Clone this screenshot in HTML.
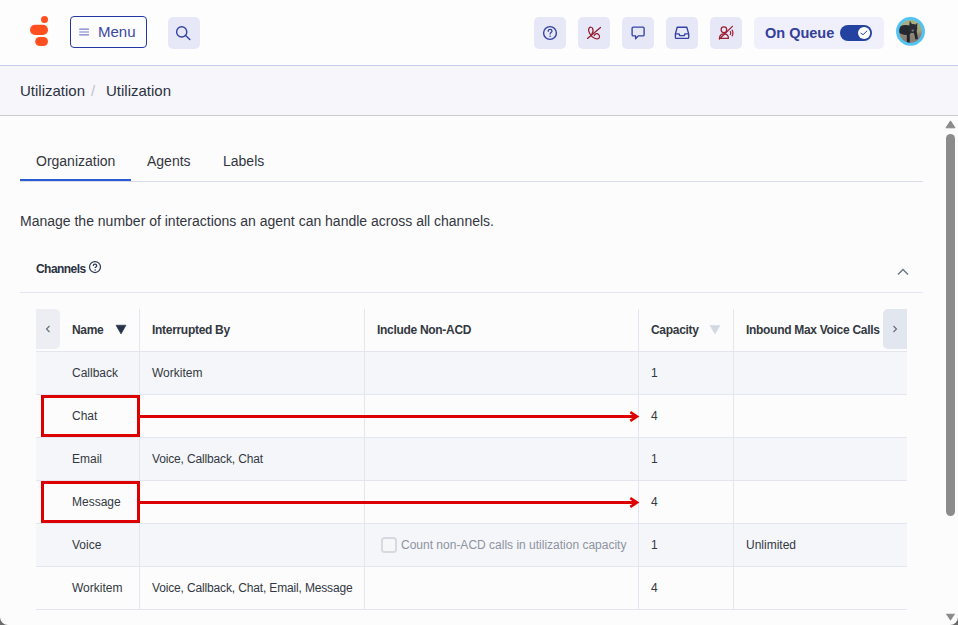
<!DOCTYPE html>
<html><head><meta charset="utf-8">
<style>
*{box-sizing:border-box;margin:0;padding:0}
html,body{width:958px;height:625px;overflow:hidden;background:#6a6a6a}
body{font-family:"Liberation Sans",sans-serif;position:relative}
#win{position:absolute;left:0;top:0;width:958px;height:625px;background:#fcfcfd;border-radius:0 0 8px 8px;overflow:hidden}
.a{position:absolute;white-space:nowrap}
#hdr{position:absolute;left:0;top:0;width:958px;height:66px;background:#fdfdfe;border-bottom:1px solid #c6cdea}
#crumb{position:absolute;left:0;top:66px;width:958px;height:50px;background:#f6f6fb;border-bottom:1px solid #cbcbcd}
.ib{position:absolute;top:17px;width:32px;height:32px;border-radius:5px;background:#e7e8f7}
.ib svg{position:absolute;left:4px;top:4px}
.t12{font-size:12px;color:#33383f}
.th{font-size:12px;font-weight:bold;color:#2b3140;letter-spacing:-0.3px}
.row{position:absolute;left:36px;width:871px;height:43px;border-bottom:1px solid #e3e6ee}
.odd{background:#f5f6f9}
.even{background:#fcfcfd}
.vl{position:absolute;top:309px;width:1px;height:301px;background:#e3e6ee}
.cell{position:absolute;line-height:42px;font-size:12px;color:#33383f;white-space:nowrap}
</style></head><body>
<div id="win">
  <div id="hdr">
    <!-- logo -->
    <svg class="a" style="left:0;top:0" width="60" height="60">
      <circle cx="44.5" cy="19.5" r="3.5" fill="#ff4f1f"/>
      <rect x="30" y="24.8" width="18" height="10.2" rx="5.1" fill="#ff4f1f"/>
      <rect x="35.2" y="37" width="12.8" height="9" rx="4.5" fill="#ff4f1f"/>
    </svg>
    <div class="a" style="left:70px;top:16px;width:77px;height:32px;border:1px solid #24389f;border-radius:4px"></div>
    <svg class="a" style="left:70px;top:16px" width="30" height="32">
      <path d="M9.3 13.2H18.9M9.3 16H18.9M9.3 18.8H18.9" stroke="#7680c2" stroke-width="1.2"/>
    </svg>
    <div class="a" style="left:98px;top:23px;font-size:15px;line-height:17px;color:#3a46a2">Menu</div>
    <div class="ib" style="left:168px"></div>
    <svg class="a" style="left:168px;top:17px" width="32" height="32">
      <circle cx="13.7" cy="14.9" r="5.1" fill="none" stroke="#3442a6" stroke-width="1.4"/>
      <path d="M17.6 18.5L21.8 22.5" stroke="#3442a6" stroke-width="1.4" stroke-linecap="round"/>
    </svg>

    <div class="ib" style="left:534px"></div>
    <svg class="a" style="left:534px;top:17px" width="32" height="32">
      <circle cx="16" cy="16" r="6.4" fill="none" stroke="#3442a6" stroke-width="1.4"/>
      <path d="M14.2 14.3c0-1.2.8-1.9 1.9-1.9s1.9.7 1.9 1.7c0 1.4-1.9 1.5-1.9 2.9" fill="none" stroke="#3442a6" stroke-width="1.25" stroke-linecap="round"/>
      <circle cx="16.1" cy="19.3" r="0.8" fill="#3442a6"/>
    </svg>
    <div class="ib" style="left:578px"></div>
    <svg class="a" style="left:578px;top:17px" width="32" height="32">
      <path d="M9.5 21.4L22.5 10.4" stroke="#951a2e" stroke-width="1.25" stroke-linecap="round"/>
      <path d="M13.8 17C15 15.5 15.4 13.2 14.6 11.4C14 10.3 12.2 9.7 11.2 10.8C10.4 11.8 10.6 14.2 11.6 16.2C12.6 18.2 14.4 20.2 16.6 21.3C18.2 22.1 20.6 22.4 21.3 20.8C21.9 19.2 21 17.1 19.2 16.6C17.9 16.3 16.8 17.3 16.2 18.4" fill="none" stroke="#951a2e" stroke-width="1.2" stroke-linecap="round"/>
    </svg>
    <div class="ib" style="left:622px"></div>
    <svg class="a" style="left:622px;top:17px" width="32" height="32">
      <path d="M11.3 10.1h9.6a1.2 1.2 0 0 1 1.2 1.2v6.4a1.2 1.2 0 0 1-1.2 1.2h-4.6l-2.7 2.8v-2.8h-2.3a1.2 1.2 0 0 1-1.2-1.2v-6.4a1.2 1.2 0 0 1 1.2-1.2z" fill="none" stroke="#3442a6" stroke-width="1.35" stroke-linejoin="round"/>
    </svg>
    <div class="ib" style="left:666px"></div>
    <svg class="a" style="left:666px;top:17px" width="32" height="32">
      <path d="M11.2 10.2h9.6l1.9 6.7v3.5a.9.9 0 0 1-.9.9H10.3a.9.9 0 0 1-.9-.9v-3.5z" fill="none" stroke="#3442a6" stroke-width="1.35" stroke-linejoin="round"/>
      <path d="M9.4 16.9h3.6l.8 1.7h4.4l.8-1.7h3.6" fill="none" stroke="#3442a6" stroke-width="1.35" stroke-linejoin="round"/>
    </svg>
    <div class="ib" style="left:710px"></div>
    <svg class="a" style="left:710px;top:17px" width="32" height="32">
      <circle cx="13.9" cy="12.7" r="2.8" fill="none" stroke="#9b1c31" stroke-width="1.25"/>
      <path d="M9.4 21.3c.3-2.6 2-4.4 4.5-4.4s4.5 1.8 4.6 4.4z" fill="none" stroke="#9b1c31" stroke-width="1.25" stroke-linejoin="round"/>
      <path d="M9.4 22L22.4 9.4" stroke="#9b1c31" stroke-width="1.25" stroke-linecap="round"/>
      <path d="M20.3 14.6c.6.8.6 2 0 2.8M22.1 13.2c1.1 1.4 1.1 4.2 0 5.6" fill="none" stroke="#9b1c31" stroke-width="1.2" stroke-linecap="round"/>
    </svg>

    <div class="a" style="left:754px;top:17px;width:130px;height:32px;border-radius:5px;background:#eff0fb"></div>
    <div class="a" style="left:765px;top:25px;font-size:14.5px;line-height:16px;font-weight:bold;color:#34409c">On Queue</div>
    <div class="a" style="left:840px;top:25px;width:32px;height:16px;border-radius:8px;background:#2443a0"></div>
    <svg class="a" style="left:840px;top:25px" width="32" height="16">
      <circle cx="24.1" cy="8" r="6.1" fill="#fff"/>
      <path d="M21 8.3L23.1 9.7L26.9 6" fill="none" stroke="#2443a0" stroke-width="1" stroke-linecap="round" stroke-linejoin="round"/>
    </svg>
    <svg class="a" style="left:895px;top:16px" width="31" height="31">
      <defs>
        <clipPath id="avc"><circle cx="15.5" cy="15.4" r="12"/></clipPath>
        <linearGradient id="avg" x1="0" y1="0" x2="0" y2="1"><stop offset="0" stop-color="#aeb487"/><stop offset="0.45" stop-color="#a2a77d"/><stop offset="0.62" stop-color="#8d8476"/><stop offset="1" stop-color="#837a6e"/></linearGradient>
      </defs>
      <g clip-path="url(#avc)">
        <rect x="0" y="0" width="31" height="31" fill="url(#avg)"/>
        <ellipse cx="10.5" cy="14" rx="7.5" ry="5" fill="#262830"/>
        <ellipse cx="18" cy="12.6" rx="4.3" ry="4.6" fill="#2a2d35"/>
        <path d="M14.2 10L14.8 4.8L17.5 9z M19.5 9.5L22.4 6.8L22 12.5z" fill="#2a2d35"/>
        <path d="M11.8 17h3v10h-3z M18.5 15l3 -0.5 1.5 8.5-2.5 .5z" fill="#23252c"/>
        <ellipse cx="17.8" cy="14.6" rx="1.3" ry="1" fill="#767880"/>
      </g>
      <circle cx="15.5" cy="15.4" r="12.9" fill="none" stroke="#52c3f2" stroke-width="3.1"/>
    </svg>
  </div>

  <div id="crumb">
    <div class="a" style="left:20px;top:16px;font-size:15px;line-height:17px;color:#2c3140">Utilization</div>
    <div class="a" style="left:91px;top:16px;font-size:15px;line-height:17px;color:#c2c3ca">/</div>
    <div class="a" style="left:106px;top:16px;font-size:15px;line-height:17px;color:#2c3140">Utilization</div>
  </div>

  <!-- tabs -->
  <div class="a" style="left:36px;top:153px;font-size:14px;line-height:16px;color:#33363d">Organization</div>
  <div class="a" style="left:147px;top:153px;font-size:14px;line-height:16px;color:#33363d">Agents</div>
  <div class="a" style="left:223px;top:153px;font-size:14px;line-height:16px;color:#33363d">Labels</div>
  <div class="a" style="left:20px;top:181px;width:903px;height:1px;background:#d9dde8"></div>
  <div class="a" style="left:20px;top:179px;width:111px;height:2px;background:#2a5bd6"></div>

  <div class="a" style="left:20px;top:213px;font-size:14px;line-height:16px;color:#33363d">Manage the number of interactions an agent can handle across all channels.</div>

  <div class="a" style="left:36px;top:263px;font-size:12px;line-height:13px;font-weight:bold;color:#2b3140;letter-spacing:-0.55px">Channels</div>
  <svg class="a" style="left:88px;top:260px" width="14" height="14">
    <circle cx="7" cy="7" r="5.5" fill="none" stroke="#2e3a50" stroke-width="1.25"/>
    <path d="M5.3 5.9c0-1 .7-1.7 1.7-1.7s1.7.6 1.7 1.5c0 1.2-1.6 1.2-1.6 2.4" fill="none" stroke="#2e3a50" stroke-width="1.25"/>
    <circle cx="7.1" cy="9.9" r="0.75" fill="#2e3a50"/>
  </svg>
  <svg class="a" style="left:895px;top:265px" width="16" height="12">
    <path d="M3 9.5L8 4.5L13 9.5" fill="none" stroke="#6b7385" stroke-width="1.4"/>
  </svg>
  <div class="a" style="left:20px;top:292px;width:903px;height:1px;background:#e3e6ee"></div>

  <!-- table -->
  <div class="row even" style="top:309px;height:43px"></div>
  <div class="row odd" style="top:352px"></div>
  <div class="row even" style="top:395px"></div>
  <div class="row odd" style="top:438px"></div>
  <div class="row even" style="top:481px"></div>
  <div class="row odd" style="top:524px"></div>
  <div class="row even" style="top:567px"></div>
  <div class="vl" style="left:139px"></div>
  <div class="vl" style="left:364px"></div>
  <div class="vl" style="left:638px"></div>
  <div class="vl" style="left:733px"></div>

  <div class="a" style="left:36px;top:309px;width:24px;height:40px;background:#eceef3;border-radius:0 5px 5px 0"></div>
  <svg class="a" style="left:36px;top:309px" width="24" height="40"><path d="M13.5 17l-3 3 3 3" fill="none" stroke="#626a78" stroke-width="1.1"/></svg>
  <div class="a" style="left:883px;top:309px;width:24px;height:40px;background:#e2e6ef;border-radius:5px 0 0 5px"></div>
  <svg class="a" style="left:883px;top:309px" width="24" height="40"><path d="M10.5 17l3 3-3 3" fill="none" stroke="#626a78" stroke-width="1.1"/></svg>

  <div class="cell th" style="left:72px;top:309px">Name</div>
  <svg class="a" style="left:115px;top:324px" width="12" height="11"><path d="M1 1.2h10L6 10z" fill="#253247" stroke="#253247" stroke-width="0.6" stroke-linejoin="round"/></svg>
  <div class="cell th" style="left:152px;top:309px">Interrupted By</div>
  <div class="cell th" style="left:377px;top:309px">Include Non-ACD</div>
  <div class="cell th" style="left:651px;top:309px">Capacity</div>
  <svg class="a" style="left:709px;top:324px" width="12" height="11"><path d="M1 1.4h10L6 10z" fill="#d3d8e2" stroke="#d3d8e2" stroke-width="0.6" stroke-linejoin="round"/></svg>
  <div class="cell th" style="left:746px;top:309px">Inbound Max Voice Calls</div>

  <div class="cell" style="left:72px;top:352px">Callback</div>
  <div class="cell" style="left:152px;top:352px">Workitem</div>
  <div class="cell" style="left:651px;top:352px">1</div>

  <div class="cell" style="left:72px;top:395px">Chat</div>
  <div class="cell" style="left:651px;top:395px">4</div>

  <div class="cell" style="left:72px;top:438px">Email</div>
  <div class="cell" style="left:152px;top:438px;letter-spacing:-0.15px">Voice, Callback, Chat</div>
  <div class="cell" style="left:651px;top:438px">1</div>

  <div class="cell" style="left:72px;top:481px">Message</div>
  <div class="cell" style="left:651px;top:481px">4</div>

  <div class="cell" style="left:72px;top:524px">Voice</div>
  <div class="a" style="left:381px;top:537px;width:16px;height:16px;border:2px solid #d6dae0;border-radius:3.5px;background:#f6f7f9"></div>
  <div class="cell" style="left:401px;top:524px;color:#8d939f">Count non-ACD calls in utilization capacity</div>
  <div class="cell" style="left:651px;top:524px">1</div>
  <div class="cell" style="left:746px;top:524px">Unlimited</div>

  <div class="cell" style="left:72px;top:567px">Workitem</div>
  <div class="cell" style="left:152px;top:567px;letter-spacing:-0.15px">Voice, Callback, Chat, Email, Message</div>
  <div class="cell" style="left:651px;top:567px">4</div>

  <!-- annotations -->
  <div class="a" style="left:41px;top:395px;width:99px;height:42px;border:3px solid #dd0000"></div>
  <div class="a" style="left:41px;top:481px;width:99px;height:42px;border:3px solid #dd0000"></div>
  <svg class="a" style="left:0;top:0" width="958" height="625">
    <path d="M140 416.5H637" stroke="#dd0000" stroke-width="3"/>
    <path d="M630.3 412.2L637 416.5L630.3 420.8" fill="none" stroke="#dd0000" stroke-width="2.6"/>
    <path d="M140 502.5H637" stroke="#dd0000" stroke-width="3"/>
    <path d="M630.3 498.2L637 502.5L630.3 506.8" fill="none" stroke="#dd0000" stroke-width="2.6"/>
  </svg>

  <!-- scrollbar -->
  <svg class="a" style="left:940px;top:116px" width="18" height="509">
    <path d="M6 11.8L10.5 4.9L15 11.8z" fill="#8b8b8b" stroke="#8b8b8b" stroke-width="1" stroke-linejoin="round"/>
    <rect x="6" y="18" width="9" height="382" rx="4.5" fill="#8b8b8b"/>
    <path d="M5.8 497.8L10.5 504.8L15.2 497.8z" fill="#8b8b8b"/>
  </svg>
</div>
</body></html>
